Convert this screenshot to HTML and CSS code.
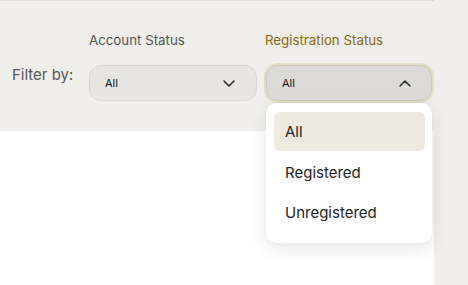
FILE: index.html
```html
<!DOCTYPE html>
<html lang="en">
<head>
<meta charset="utf-8">
<title>Filters</title>
<link rel="stylesheet" href="styles.css">
</head>
<body>
<div class="page">
  <section class="filters">
    <span class="filter-by">Filter by:</span>
    <div class="group group-account">
      <label class="group-label">Account Status</label>
      <div class="select">
        <span class="select-value">All</span>
        <svg class="chev" width="12" height="7" viewBox="0 0 12 7"><path d="M1 1l5 5 5-5" fill="none" stroke="#2a2a2a" stroke-width="1.5" stroke-linecap="round" stroke-linejoin="round"/></svg>
      </div>
    </div>
    <div class="group group-reg">
      <label class="group-label active">Registration Status</label>
      <div class="select open">
        <span class="select-value">All</span>
        <svg class="chev" width="12" height="7" viewBox="0 0 12 7"><path d="M1 6l5-5 5 5" fill="none" stroke="#2a2a2a" stroke-width="1.5" stroke-linecap="round" stroke-linejoin="round"/></svg>
        <ul class="menu">
          <li class="option selected">All</li>
          <li class="option">Registered</li>
          <li class="option">Unregistered</li>
        </ul>
      </div>
    </div>
  </section>
  <main class="content"></main>
</div>
</body>
</html>
```

FILE: styles.css
```css
html, body {
  margin: 0;
  padding: 0;
}
body {
  background: #efeeea;
  font-family: Inter, "Noto Sans", sans-serif;
  height: 285px;
  overflow: hidden;
}
.page {
  width: 434px;
  height: 285px;
  border-top: 1px solid #dad9d5;
  display: flex;
  flex-direction: column;
  box-sizing: border-box;
}
.filters {
  background: #efeeea;
  height: 130px;
  flex: none;
  display: flex;
  align-items: flex-start;
  padding: 31px 0 0 12px;
  box-sizing: border-box;
  position: relative;
  z-index: 2;
}
.filter-by {
  font-size: 15px;
  line-height: 18px;
  color: #555;
  margin-top: 34px;
  width: 77px;
  flex: none;
}
.group {
  display: flex;
  flex-direction: column;
}
.group-account {
  width: 168px;
}
.group-reg {
  width: 166px;
  margin-left: 9px;
}
.group-label {
  font-size: 13.3px;
  line-height: 16px;
  color: #545454;
  margin-bottom: 17px;
}
.group-reg .group-label {
  margin-left: -1px;
}
.group-label.active {
  color: #87680e;
}
.select {
  position: relative;
  height: 36px;
  box-sizing: border-box;
  border: 1px solid #d9d7d1;
  border-radius: 12px;
  background: #e7e6e2;
  display: flex;
  align-items: center;
  justify-content: space-between;
  padding: 0 21px 0 15px;
}
.select.open {
  background: #dcdbd7;
  border-color: #cdc9bd;
  box-shadow: 0 0 0 2px #e2dcc8;
  padding-right: 20px;
}
.select-value {
  font-size: 11px;
  color: #111;
}
.chev {
  display: block;
}
.menu {
  position: absolute;
  top: 37px;
  left: -1px;
  right: -1px;
  margin: 0;
  list-style: none;
  background: #fff;
  border-radius: 10px;
  box-shadow: 0 6px 18px rgba(0, 0, 0, 0.10), 0 0 1px rgba(0, 0, 0, 0.12);
  padding: 9px 7px 10px 8px;
}
.option {
  height: 40px;
  line-height: 40px;
  padding-left: 11px;
  font-size: 15px;
  color: #222;
  border-radius: 6px;
}
.option.selected {
  background: #ede9df;
  height: 39px;
  line-height: 39px;
  margin-bottom: 2px;
}
.content {
  flex: 1;
  background: #fff;
}
```
